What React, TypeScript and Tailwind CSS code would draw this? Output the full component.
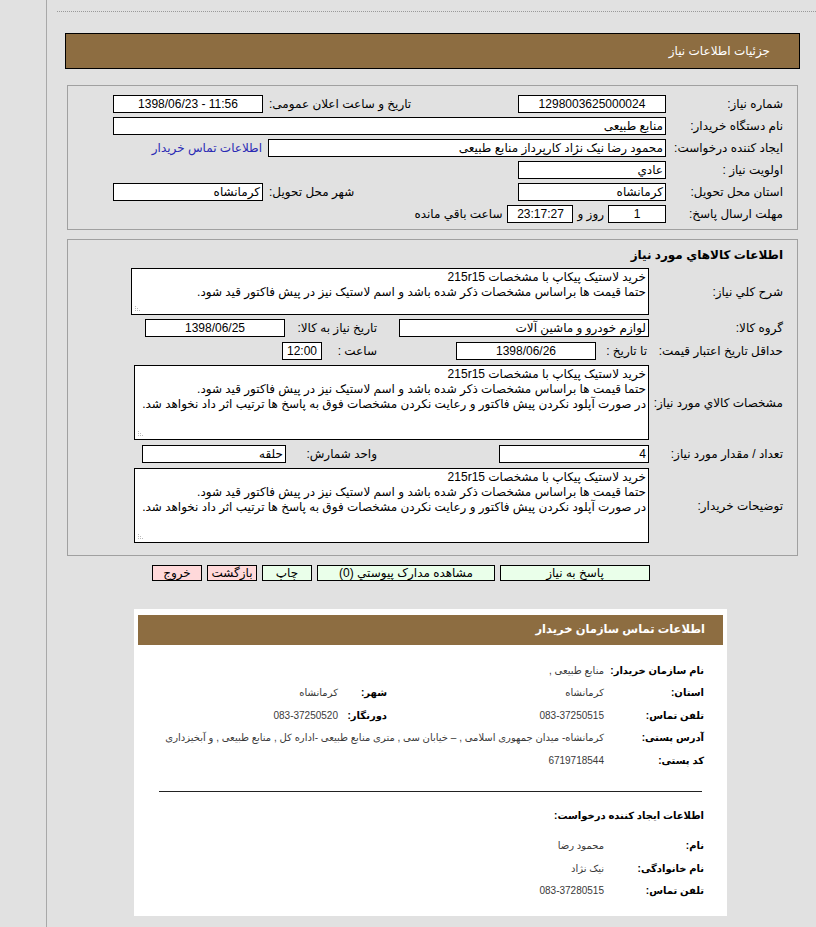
import React from 'react';

const Box = ({
  w,
  children,
  center = false,
}: {
  w: string;
  children?: React.ReactNode;
  center?: boolean;
}) => (
  <div
    className={`h-[18px] shrink-0 overflow-hidden whitespace-nowrap border border-black bg-white px-[2px] leading-[16px] ${
      center ? 'text-center' : 'text-right'
    } ${w}`}
  >
    {children}
  </div>
);

const Grip = () => (
  <svg className="absolute bottom-[2px] left-[2px]" width="8" height="8" viewBox="0 0 8 8">
    <rect x="1" y="6" width="1" height="1" fill="#bbb" />
    <rect x="3" y="6" width="1" height="1" fill="#bbb" />
    <rect x="5" y="6" width="1" height="1" fill="#bbb" />
    <rect x="1" y="4" width="1" height="1" fill="#bbb" />
    <rect x="3" y="4" width="1" height="1" fill="#bbb" />
    <rect x="1" y="2" width="1" height="1" fill="#bbb" />
  </svg>
);

const Area = ({ w, h, lines }: { w: string; h: string; lines: string[] }) => (
  <div
    className={`relative shrink-0 overflow-hidden border border-black bg-white px-[2px] pt-[1px] text-right text-[12px] leading-[15px] ${w} ${h}`}
  >
    {lines.map((l) => (
      <div key={l} className="whitespace-nowrap">
        {l}
      </div>
    ))}
    <Grip />
  </div>
);

const Btn = ({ w, pink = false, children }: { w: string; pink?: boolean; children: React.ReactNode }) => (
  <div
    className={`h-[16px] shrink-0 border border-black text-center leading-[14px] ${
      pink ? 'bg-[#ffd9da]' : 'bg-[#eaffea]'
    } ${w}`}
  >
    {children}
  </div>
);

const desc1 = 'خرید لاستیک پیکاپ با مشخصات 215r15';
const desc2 = 'حتما قیمت ها براساس مشخصات ذکر شده باشد و اسم لاستیک نیز در پیش فاکتور قید شود.';
const desc3 = 'در صورت آپلود نکردن پیش فاکتور و رعایت نکردن مشخصات فوق به پاسخ ها ترتیب اثر داد نخواهد شد.';

const InfoRow = ({
  label,
  value,
  label2,
  value2,
}: {
  label: string;
  value: string;
  label2?: string;
  value2?: string;
}) => (
  <div className="flex h-[22.5px] items-center">
    <div className="w-[100px] shrink-0 whitespace-nowrap text-[10px] font-bold text-black">{label}</div>
    <div className="w-[214px] shrink-0 whitespace-nowrap text-[#3a3a3a]">{value}</div>
    {label2 && (
      <div className="w-[52px] shrink-0 whitespace-nowrap pr-[3px] text-[10px] font-bold text-black">{label2}</div>
    )}
    {value2 && <div className="shrink-0 text-[#3a3a3a]">{value2}</div>}
  </div>
);

export default function App() {
  return (
    <div className="flex min-h-[927px] bg-[#e1e1e1] font-['Liberation_Sans','DejaVu_Sans',sans-serif] text-[12px] text-black">
      <div className="w-[47px] shrink-0 border-r border-[#a8a8a8]" />
      <div dir="rtl" className="flex-1">
        <div className="ml-[10px] mt-[11px] border-t border-dotted border-[#999]" />

        <div className="ml-[18px] mr-[16px] mt-[21px] flex h-[36px] items-center border border-black bg-[#8d6d41] pr-[29px] text-[12px] text-white">
          جزئیات اطلاعات نیاز
        </div>

        {/* panel 1 */}
        <div className="ml-[20px] mr-[18px] mt-[16px] border border-[#a0a0a0] pb-[4px] pt-[7px]">
          <div className="flex h-[22px] items-center">
            <div className="w-[131px] shrink-0 pr-[14px]">شماره نیاز:</div>
            <Box w="w-[148px]" center>
              1298003625000024
            </Box>
            <div className="flex-1 pl-[6px] text-left">تاریخ و ساعت اعلان عمومی:</div>
            <Box w="w-[150px]" center>
              <span dir="ltr">1398/06/23 - 11:56</span>
            </Box>
            <div className="w-[45px] shrink-0" />
          </div>
          <div className="flex h-[22px] items-center">
            <div className="w-[131px] shrink-0 pr-[14px]">نام دستگاه خریدار:</div>
            <Box w="w-[553px]">منابع طبیعی</Box>
          </div>
          <div className="flex h-[22px] items-center">
            <div className="w-[131px] shrink-0 pr-[14px] whitespace-nowrap">ایجاد کننده درخواست:</div>
            <Box w="w-[398px]">محمود رضا نیک نژاد کارپرداز منابع طبیعی</Box>
            <div className="pr-[6px] text-[#2a2ab4]">اطلاعات تماس خریدار</div>
          </div>
          <div className="flex h-[22px] items-center">
            <div className="w-[131px] shrink-0 pr-[14px]">اولویت نیاز :</div>
            <Box w="w-[148px]">عادي</Box>
          </div>
          <div className="flex h-[22px] items-center">
            <div className="w-[131px] shrink-0 pr-[14px]">استان محل تحویل:</div>
            <Box w="w-[148px]">کرمانشاه</Box>
            <div className="flex-1 pl-[6px] text-left">شهر محل تحویل:</div>
            <Box w="w-[150px]">کرمانشاه</Box>
            <div className="w-[45px] shrink-0" />
          </div>
          <div className="flex h-[22px] items-center">
            <div className="w-[131px] shrink-0 pr-[14px]">مهلت ارسال پاسخ:</div>
            <Box w="w-[58px]" center>
              1
            </Box>
            <div className="px-[4px]">روز و</div>
            <Box w="w-[66px]" center>
              23:17:27
            </Box>
            <div className="pr-[5px]">ساعت باقي مانده</div>
          </div>
        </div>

        {/* panel 2 */}
        <div className="ml-[20px] mr-[18px] mt-[9px] border border-[#a0a0a0] pb-[12px]">
          <div className="flex h-[28px] items-center pr-[14px] pt-[2px] font-bold">اطلاعات كالاهاي مورد نياز</div>

          <div className="flex h-[47px] items-center">
            <div className="w-[148px] shrink-0 pr-[14px]">شرح کلي نياز:</div>
            <Area w="w-[518px]" h="h-[47px]" lines={[desc1, desc2]} />
          </div>

          <div className="mt-[4px] flex h-[18px] items-center">
            <div className="w-[148px] shrink-0 pr-[14px]">گروه کالا:</div>
            <Box w="w-[250px]">لوازم خودرو و ماشین آلات</Box>
            <div className="w-[114px] shrink-0 pr-[22px]">تاریخ نیاز به کالا:</div>
            <Box w="w-[140px]" center>
              1398/06/25
            </Box>
          </div>

          <div className="mt-[5px] flex h-[18px] items-center">
            <div className="w-[148px] shrink-0 pr-[14px] whitespace-nowrap">حداقل تاریخ اعتبار قیمت:</div>
            <div className="w-[53px] shrink-0 pr-[2px]">تا تاریخ :</div>
            <Box w="w-[140px]" center>
              1398/06/26
            </Box>
            <div className="w-[79px] shrink-0" />
            <div className="w-[55px] shrink-0">ساعت :</div>
            <Box w="w-[40px]" center>
              12:00
            </Box>
          </div>

          <div className="mt-[5px] flex h-[75px] items-center">
            <div className="w-[148px] shrink-0 pr-[14px] whitespace-nowrap">مشخصات کالاي مورد نياز:</div>
            <Area w="w-[515px]" h="h-[75px]" lines={[desc1, desc2, desc3]} />
          </div>

          <div className="mt-[5px] flex h-[18px] items-center">
            <div className="w-[148px] shrink-0 pr-[14px] whitespace-nowrap">تعداد / مقدار مورد نیاز:</div>
            <Box w="w-[150px]">4</Box>
            <div className="w-[213px] shrink-0 pr-[122px] whitespace-nowrap">واحد شمارش:</div>
            <Box w="w-[144px]">حلقه</Box>
          </div>

          <div className="mt-[5px] flex h-[75px] items-center">
            <div className="w-[148px] shrink-0 pr-[14px]">توضیحات خریدار:</div>
            <Area w="w-[515px]" h="h-[75px]" lines={[desc1, desc2, desc3]} />
          </div>
        </div>

        {/* buttons */}
        <div className="mr-[166px] mt-[9px] flex gap-[5px]">
          <Btn w="w-[150px]">پاسخ به نیاز</Btn>
          <Btn w="w-[178px]">مشاهده مدارک پیوستي (0)</Btn>
          <Btn w="w-[50px]">چاپ</Btn>
          <Btn w="w-[50px]" pink>
            بازگشت
          </Btn>
          <Btn w="w-[50px]" pink>
            خروج
          </Btn>
        </div>

        {/* contact panel */}
        <div className="ml-[87px] mr-[89px] mt-[28px] bg-white px-[4px] pb-[14px] pt-[6px] text-[10px]">
          <div className="flex h-[30px] items-center bg-[#8d6d41] pr-[18px] text-[11.5px] font-bold text-white">
            اطلاعات تماس سازمان خریدار
          </div>
          <div className="mt-[14px] pr-[19px]">
            <InfoRow label="نام سازمان خریدار:" value="منابع طبیعی ," />
            <InfoRow label="استان:" value="کرمانشاه" label2="شهر:" value2="کرمانشاه" />
            <InfoRow label="تلفن تماس:" value="083-37250515" label2="دورنگار:" value2="083-37250520" />
            <InfoRow
              label="آدرس پستی:"
              value="کرمانشاه- میدان جمهوری اسلامی , – خیابان سی , متری منابع طبیعی -اداره کل , منابع طبیعی , و آبخیزداری"
            />
            <InfoRow label="کد پستی:" value="6719718544" />
          </div>
          <div className="mx-[21px] mt-[19px] border-t border-[#222]" />
          <div className="mt-[16px] pr-[19px] text-[10px] font-bold">اطلاعات ایجاد کننده درخواست:</div>
          <div className="mt-[12px] pr-[19px]">
            <InfoRow label="نام:" value="محمود رضا" />
            <InfoRow label="نام خانوادگی:" value="نیک نژاد" />
            <InfoRow label="تلفن تماس:" value="083-37280515" />
          </div>
        </div>
      </div>
    </div>
  );
}
